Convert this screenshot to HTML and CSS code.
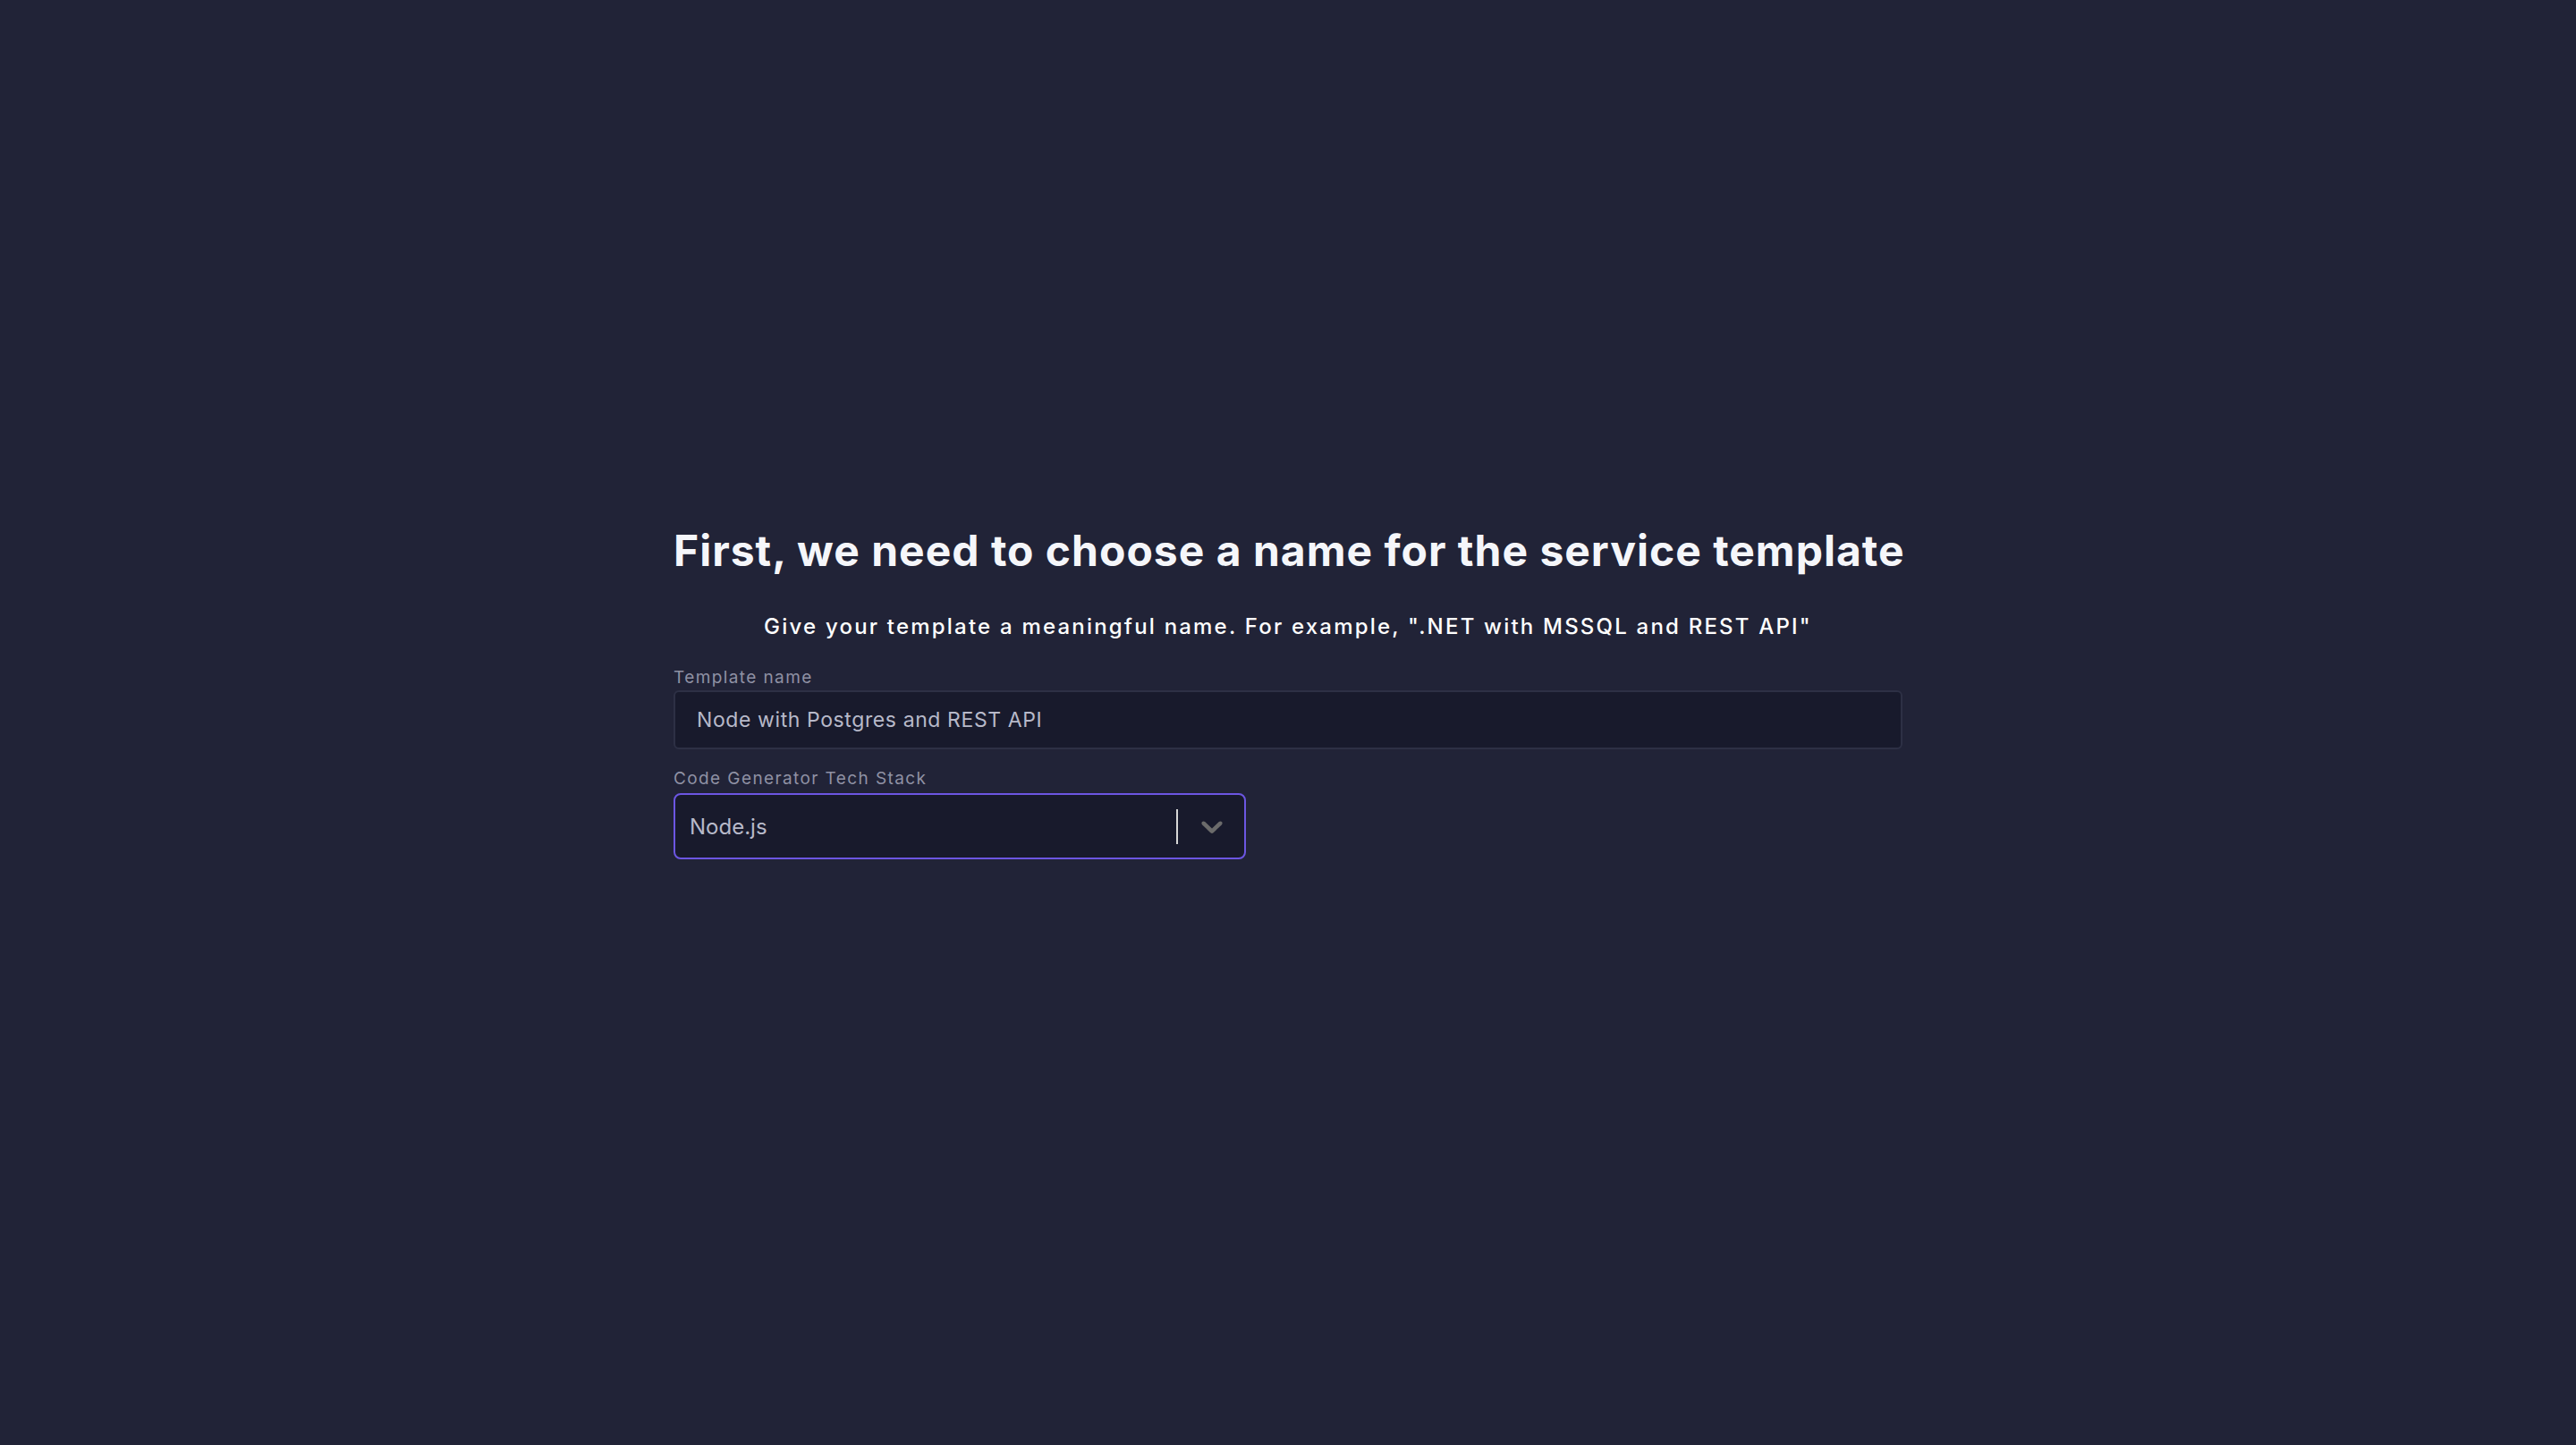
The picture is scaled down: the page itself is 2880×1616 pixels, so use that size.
FILE: index.html
```html
<!DOCTYPE html>
<html lang="en">
<head>
<meta charset="utf-8">
<title>Service template</title>
<link rel="stylesheet" href="styles.css">
</head>
<body>
<main class="page">
  <section class="wizard">
    <h1 class="title">First, we need to choose a name for the service template</h1>
    <p class="subtitle">Give your template a meaningful name. For example, ".NET with MSSQL and REST API"</p>
    <div class="field field-first">
      <label class="label" for="tname">Template name</label>
      <input class="text-input" id="tname" type="text" value="Node with Postgres and REST API">
    </div>
    <div class="field">
      <span class="label">Code Generator Tech Stack</span>
      <div class="select">
        <span class="select-value">Node.js</span>
        <span class="select-indicators">
          <span class="separator"></span>
          <svg class="chevron" viewBox="0 0 20 20" aria-hidden="true"><path d="M4.516 7.548c0.436-0.446 1.043-0.481 1.576 0l3.908 3.747 3.908-3.747c0.533-0.481 1.141-0.446 1.574 0 0.436 0.445 0.408 1.197 0 1.615-0.406 0.418-4.695 4.502-4.695 4.502-0.217 0.223-0.502 0.335-0.787 0.335s-0.57-0.112-0.789-0.335c0 0-4.287-4.084-4.695-4.502s-0.436-1.17 0-1.615z"/></svg>
        </span>
      </div>
    </div>
  </section>
</main>
</body>
</html>
```
FILE: styles.css
```css
* { box-sizing: border-box; }
html, body {
  margin: 0;
  padding: 0;
  background: #212337;
}
body {
  font-family: Inter, "Open Sans", sans-serif;
  min-height: 1616px;
}
.page {
  display: flex;
  justify-content: center;
  padding-top: 586px;
}
.wizard {
  width: 1374px;
  display: flex;
  flex-direction: column;
}
.title {
  margin: 0;
  font-size: 48px;
  line-height: 60px;
  font-weight: 700;
  letter-spacing: 1px;
  color: #f5f6fa;
  text-align: center;
  white-space: nowrap;
}
.subtitle {
  margin: 39px 0 0;
  font-size: 24px;
  line-height: 32px;
  font-weight: 500;
  letter-spacing: 2.2px;
  color: #ffffff;
  text-align: center;
  white-space: nowrap;
}
.field {
  display: flex;
  flex-direction: column;
  margin-top: 21px;
}
.field-first {
  margin-top: 29px;
}
.label {
  font-size: 19px;
  line-height: 24px;
  letter-spacing: 1.4px;
  color: #8f91a4;
}
.text-input {
  height: 66px;
  margin: 2px 0 0;
  padding: 0 24px;
  border: 2px solid #2d3045;
  border-radius: 6px;
  background: #181a2c;
  color: #b7b9c9;
  font-family: inherit;
  font-size: 23px;
  letter-spacing: 0.6px;
  outline: none;
}
.select {
  width: 640px;
  height: 74px;
  margin-top: 4px;
  display: flex;
  align-items: center;
  border: 2px solid #6c56e2;
  border-radius: 8px;
  background: #181a2c;
}
.select-value {
  flex: 1;
  padding-left: 16px;
  font-size: 24px;
  color: #b7b9c9;
}
.select-indicators {
  display: flex;
  align-items: center;
}
.separator {
  width: 2px;
  height: 39px;
  background: #d6d6d6;
}
.chevron {
  width: 40px;
  height: 40px;
  margin: 0 16px 0 18px;
  fill: #6b6b6b;
}
```
